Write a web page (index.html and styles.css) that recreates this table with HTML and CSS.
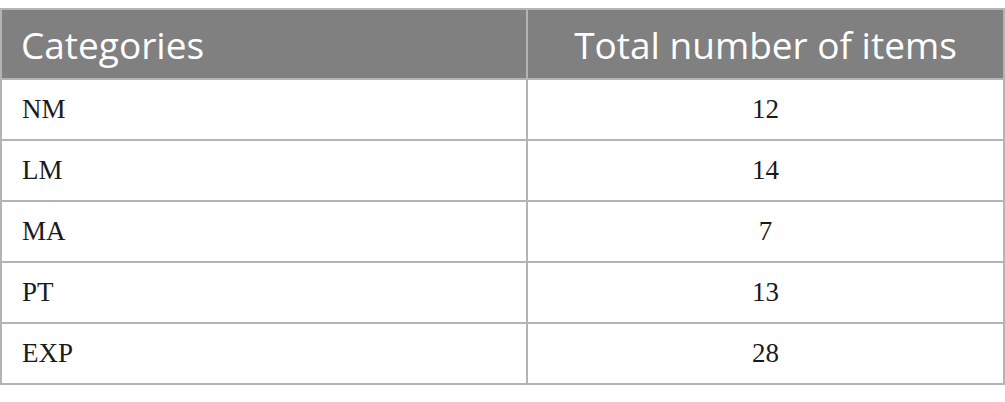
FILE: index.html
```html
<!DOCTYPE html>
<html>
<head>
<meta charset="utf-8">
<link rel="stylesheet" href="styles.css">
</head>
<body>
<table class="data">
  <thead>
    <tr><th class="c1">Categories</th><th class="c2">Total number of items</th></tr>
  </thead>
  <tbody>
    <tr><td class="c1">NM</td><td class="c2">12</td></tr>
    <tr><td class="c1">LM</td><td class="c2">14</td></tr>
    <tr><td class="c1">MA</td><td class="c2">7</td></tr>
    <tr><td class="c1">PT</td><td class="c2">13</td></tr>
    <tr><td class="c1">EXP</td><td class="c2">28</td></tr>
  </tbody>
</table>
</body>
</html>
```
FILE: styles.css
```css
html, body {
  margin: 0;
  padding: 0;
  background: #ffffff;
}
body {
  padding-top: 8px;
}
.data {
  width: 1005px;
  border-collapse: collapse;
  table-layout: fixed;
}
.data th, .data td {
  border: 2px solid #b4b4b4;
  padding: 0 0 0 20px;
}
.data th {
  background: #7f807f;
  color: #ffffff;
  font-family: "Open Sans", sans-serif;
  font-weight: 400;
  font-size: 37px;
  height: 68px;
  text-align: left;
  padding-left: 19px;
  border-color: #b4b4b4;
}
.data td {
  font-family: "Liberation Serif", serif;
  font-size: 27px;
  color: #1a1a1a;
  height: 59px;
}
.data .c1 { width: 505px; }
.data .c2 { text-align: center; padding: 0; }
```
